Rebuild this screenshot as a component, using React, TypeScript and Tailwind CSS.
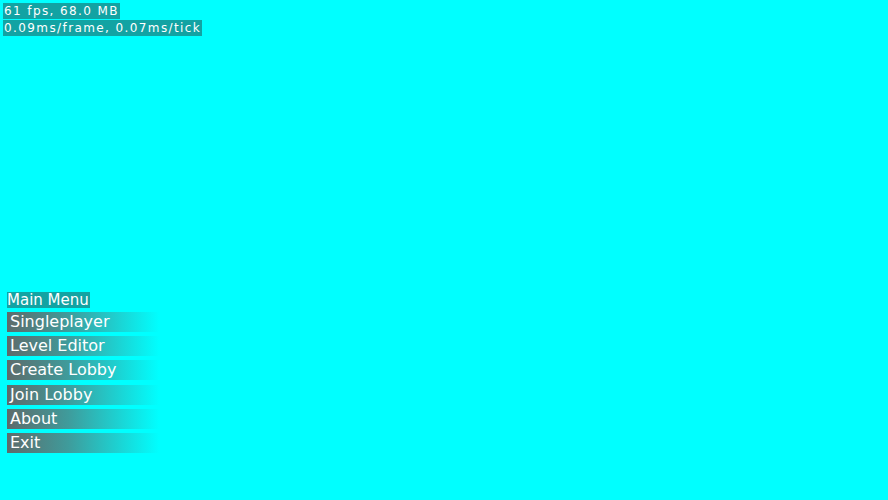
const items = ["Singleplayer", "Level Editor", "Create Lobby", "Join Lobby", "About", "Exit"];

export default function App() {
  return (
    <div
      className="w-[888px] h-[500px] bg-[#00ffff] overflow-hidden flex flex-col"
      style={{ fontFamily: '"DejaVu Sans", Verdana, sans-serif' }}
    >
      {/* debug overlay */}
      <div className="flex flex-col items-start gap-[1px] pt-[3px] pl-[3px] text-[12px] leading-[16px] tracking-[1.4px] text-white">
        <span className="bg-[#12a3a3] px-[1px]">61 fps, 68.0 MB</span>
        <span className="bg-[#12a3a3] px-[1px]">0.09ms/frame, 0.07ms/tick</span>
      </div>

      {/* menu */}
      <div className="mt-[256px] ml-[7px] flex flex-col items-start text-white">
        <span className="bg-[#12a3a3] text-[15px] leading-[16px] pr-[1px]">Main Menu</span>
        <div className="flex flex-col gap-[4.2px] mt-[4px]">
          {items.map((label) => (
            <div
              key={label}
              className="w-[152px] h-[20px] pl-[3px] text-[16px] leading-[20px] bg-[linear-gradient(to_right,#5e6b6b_0%,#3f9b9b_40%,#00ffff_100%)]"
            >
              {label}
            </div>
          ))}
        </div>
      </div>
    </div>
  );
}
